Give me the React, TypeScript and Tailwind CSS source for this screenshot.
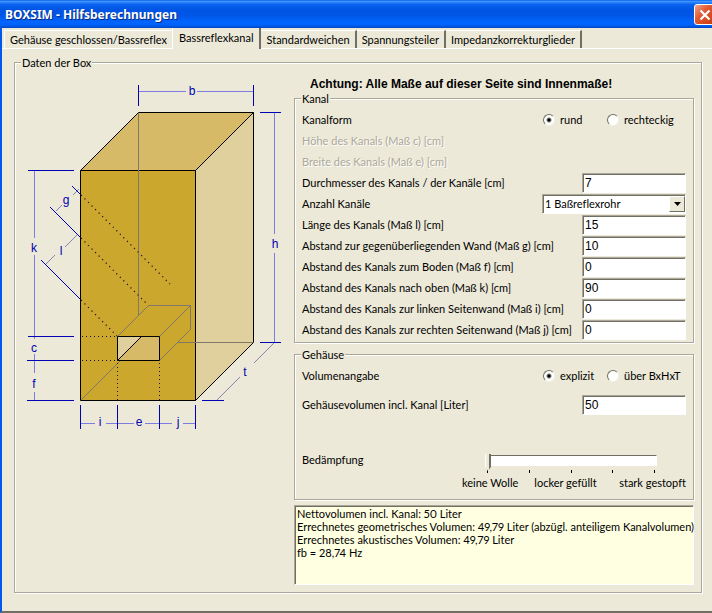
import { useState } from "react";
import type { ReactNode } from "react";
import { clsx } from "clsx";

const tabs = [
  "Gehäuse geschlossen/Bassreflex",
  "Bassreflexkanal",
  "Standardweichen",
  "Spannungsteiler",
  "Impedanzkorrekturglieder",
];

const channelFields = [
  { id: "laenge", label: "Länge des Kanals (Maß l) [cm]", value: "15" },
  { id: "wand", label: "Abstand zur gegenüberliegenden Wand (Maß g) [cm]", value: "10" },
  { id: "boden", label: "Abstand des Kanals zum Boden (Maß f) [cm]", value: "0" },
  { id: "oben", label: "Abstand des Kanals nach oben (Maß k) [cm]", value: "90" },
  { id: "links", label: "Abstand des Kanals zur linken Seitenwand (Maß i) [cm]", value: "0" },
  { id: "rechts", label: "Abstand des Kanals zur rechten Seitenwand (Maß j) [cm]", value: "0" },
];

const sunken =
  "border border-t-[#aca899] border-l-[#aca899] border-r-white border-b-white shadow-[inset_1px_1px_0_#716f64]";

function TitleBar() {
  return (
    <header className="flex h-7 items-center justify-between bg-[linear-gradient(#0a5fe8_0%,#3d95ff_5%,#0a62f0_16%,#0054e3_35%,#0056e6_55%,#0066ff_80%,#0061f8_90%,#0045c4_100%)] pt-px pl-[5px]">
      <h1 className="font-['Noto_Sans','Open_Sans',sans-serif] text-[12px] font-bold text-white [text-shadow:1px_1px_0_#0a2a80]">
        BOXSIM - Hilfsberechnungen
      </h1>
      <button
        type="button"
        aria-label="Schließen"
        className="-mr-[3px] flex size-[21px] items-center justify-center rounded-[3px] border border-white bg-[linear-gradient(135deg,#f0a58c,#e25a33_40%,#c83a10)]"
      >
        <svg viewBox="0 0 12 12" className="size-3" aria-hidden="true">
          <path d="M1.5 1.5 10.5 10.5 M10.5 1.5 1.5 10.5" stroke="#fff" strokeWidth="2.2" />
        </svg>
      </button>
    </header>
  );
}

function Group({ title, className, children }: { title: string; className?: string; children: ReactNode }) {
  return (
    <fieldset
      className={clsx(
        "min-w-0 border border-[#aca899] shadow-[inset_1px_1px_0_#fff,1px_1px_0_#fff]",
        className
      )}
    >
      <legend className="ml-[6px] bg-[#ece9d8] px-px leading-[13px]">{title}</legend>
      {children}
    </fieldset>
  );
}

function Field({ id, label, value, autoFocus }: { id: string; label: string; value: string; autoFocus?: boolean }) {
  return (
    <div className="flex h-[21px] items-center justify-between">
      <label htmlFor={id}>{label}</label>
      <input
        id={id}
        type="text"
        defaultValue={value}
        autoFocus={autoFocus}
        className={clsx(
          "h-5 w-[104px] bg-white pl-[2px] font-['Liberation_Sans',Arial,sans-serif] text-[12px] outline-none",
          sunken
        )}
      />
    </div>
  );
}

function RadioRow({ name, label, options }: { name: string; label: string; options: string[] }) {
  return (
    <div role="radiogroup" aria-label={label} className="flex h-[21px] items-center justify-between">
      <span>{label}</span>
      <div className="grid w-[143px] grid-cols-[64px_1fr]">
        {options.map((option, i) => (
          <label key={option} className="flex items-center gap-[5px] whitespace-nowrap">
            <input
              type="radio"
              name={name}
              defaultChecked={i === 0}
              className="size-3 shrink-0 appearance-none rounded-full border border-t-[#716f64] border-r-[#f4f2e8] border-b-[#f4f2e8] border-l-[#716f64] bg-white checked:bg-[radial-gradient(circle,#000_1px,#fff_3px)]"
            />
            {option}
          </label>
        ))}
      </div>
    </div>
  );
}

function BoxDrawing() {
  return (
    <svg
      viewBox="15 70 275 370"
      className="mt-px h-[370px] w-[275px] shrink-0"
      role="img"
      aria-label="Maße der Box"
      fill="none"
    >
      {/* cabinet */}
      <g stroke="#000">
        <path d="M80.5 170.5 138.5 112.5H253.5L195.5 170.5Z" fill="#d6ba67" />
        <path d="M195.5 170.5 253.5 112.5V342.5L195.5 400.5Z" fill="#e0d09d" />
        <path d="M80.5 170.5H195.5V400.5H80.5Z" fill="#cba72e" />
      </g>

      {/* hidden edges */}
      <g stroke="#80796a">
        <path d="M138.5 113V315" />
        <path d="M81 400 120 361" />
        <path d="M177 342.5H253" />
        <path d="M117.5 336.5 148.5 305.5H190.5V329.5L159.5 360.5" />
        <path d="M159.5 336.5 190.5 305.5" />
      </g>

      {/* channel opening */}
      <path d="M117.5 336.5H159.5V360.5H117.5Z" fill="#d6ba67" />
      <path d="M117.5 336.5H141.5L117.5 360.5Z" fill="#e0d09d" />
      <path d="M117.5 360.5 141.5 336.5" stroke="#000" />
      <path d="M117.5 336.5H159.5V360.5H117.5Z" stroke="#000" />

      {/* guides */}
      <g stroke="#1a1030" strokeDasharray="1 3">
        <path d="M82 336.5H117 M82 360.5H117" />
        <path d="M117.5 363V400 M159.5 363V400" />
      </g>
      <g stroke="#1a1030" strokeWidth="1.2" strokeDasharray="1.2 3.8">
        <path d="M81 195 170 284" />
        <path d="M81 238 148 305" />
        <path d="M81 300 117 336" />
      </g>

      {/* dimension lines */}
      <g stroke="#7d7de0">
        <path d="M139 91.5H186 M197 91.5H253" />
        <path d="M274.5 113V234 M274.5 253V342" />
        <path d="M34.5 171V238 M34.5 255V339 M34.5 354V373 M34.5 392V400" />
        <path d="M81 423.5H95 M106 423.5H134 M145 423.5H172 M183 423.5H195" />
      </g>
      <g stroke="#8585b5">
        <path d="M274 343 254 363 M240 377 217 400" />
        <path d="M79 189 73 195 M62 205 56 211" />
        <path d="M78 234 65 247 M55 255 46 264" />
      </g>
      <g stroke="#0000b4">
        <path d="M138.5 85V106 M253.5 85V106" />
        <path d="M260 112.5H281 M260 342.5H281 M202 400.5H224" />
        <path d="M28 170.5H74 M28 336.5H74 M27 360.5H74 M27 400.5H74" />
        <path d="M80.5 405V429 M117.5 405V429 M159.5 405V429 M195.5 405V429" />
        <path d="M72 186 80.5 194.5 M50 207 80.5 237.5 M41 260 80.5 299.5" />
      </g>

      <g
        className="font-['Liberation_Sans',Arial,sans-serif]"
        fill="#0000b4"
        fontSize="12"
        textAnchor="middle"
      >
        <text x="192" y="95">b</text>
        <text x="275" y="248">h</text>
        <text x="245" y="376">t</text>
        <text x="66" y="204">g</text>
        <text x="61" y="255">l</text>
        <text x="34" y="252">k</text>
        <text x="34" y="352">c</text>
        <text x="34" y="388">f</text>
        <text x="100" y="426">i</text>
        <text x="139" y="426">e</text>
        <text x="178" y="426">j</text>
      </g>
    </svg>
  );
}

function DampingSlider() {
  return (
    <div className="flex items-start justify-between pt-9">
      <label htmlFor="daempfung" className="pt-[2px]">
        Bedämpfung
      </label>
      <div className="w-[224px]">
        <div className="mr-[29px] ml-[23px]">
          <input
            id="daempfung"
            type="range"
            min={0}
            max={4}
            defaultValue={0}
            className="block h-[19px] w-full appearance-none bg-transparent outline-none [&::-webkit-slider-runnable-track]:h-[11px] [&::-webkit-slider-runnable-track]:border [&::-webkit-slider-runnable-track]:border-t-[#716f64] [&::-webkit-slider-runnable-track]:border-r-white [&::-webkit-slider-runnable-track]:border-b-white [&::-webkit-slider-runnable-track]:border-l-[#716f64] [&::-webkit-slider-runnable-track]:bg-white [&::-webkit-slider-thumb]:-mt-[2px] [&::-webkit-slider-thumb]:-ml-px [&::-webkit-slider-thumb]:h-[17px] [&::-webkit-slider-thumb]:w-[6px] [&::-webkit-slider-thumb]:appearance-none [&::-webkit-slider-thumb]:bg-[linear-gradient(90deg,#fff_1px,#ece9d8_1px,#ece9d8_4px,#716f64_4px)] [&::-webkit-slider-thumb]:[clip-path:polygon(0_0,100%_0,100%_75%,50%_100%,0_75%)]"
          />
          <div className="flex justify-between px-[2px]">
            {[0, 1, 2, 3, 4].map((tick) => (
              <span key={tick} className="h-[3px] w-px bg-black" />
            ))}
          </div>
        </div>
        <div className="mt-[3px] flex gap-4 whitespace-nowrap">
          <span>keine Wolle</span>
          <span>locker gefüllt</span>
          <span className="ml-auto">stark gestopft</span>
        </div>
      </div>
    </div>
  );
}

export default function App() {
  const [active, setActive] = useState(1);

  return (
    <div className="overflow-hidden bg-[#ece9d8] font-[Lato,'Liberation_Sans',sans-serif] text-[11px] leading-[13px] text-black [font-variant-ligatures:none]">
      <TitleBar />
      <div className="border-b-2 border-l-2 border-b-[#716f64] border-l-[#0058ee]">
        <div role="tablist" className="flex h-[21px] items-end border-b border-white pl-[2px]">
          {tabs.map((tab, i) => (
            <button
              key={tab}
              type="button"
              role="tab"
              aria-selected={active === i}
              onClick={() => setActive(i)}
              className={clsx(
                "whitespace-nowrap",
                active === i
                  ? "-mb-px h-[21px] border-r-2 border-l border-r-[#716f64] border-l-white bg-[#ece9d8] px-[6px] pb-[2px]"
                  : "h-[18px] border-t border-white px-[5px]",
                active > i ? "border-l" : active < i && "border-r-2 border-r-[#716f64]"
              )}
            >
              {tab}
            </button>
          ))}
        </div>

        <main className="pt-[7px] pr-[10px] pb-[18px] pl-3">
          <Group title="Daten der Box">
            <div className="flex pr-[7px] pb-[7px]">
              <BoxDrawing />
              <div className="ml-1 min-w-0 flex-1 pt-2">
                <h2 className="pl-4 font-['Liberation_Sans',Arial,sans-serif] text-[12px] leading-[15px] font-bold">
                  Achtung: Alle Maße auf dieser Seite sind Innenmaße!
                </h2>

                <Group title="Kanal" className="pr-[7px] pb-[2px]">
                  <div className="pt-1 pl-[7px]">
                    <RadioRow name="kanalform" label="Kanalform" options={["rund", "rechteckig"]} />
                    <p className="flex h-[21px] items-center text-[#aca899] [text-shadow:1px_1px_0_#fff]">
                      Höhe des Kanals (Maß c) [cm]
                    </p>
                    <p className="flex h-[21px] items-center text-[#aca899] [text-shadow:1px_1px_0_#fff]">
                      Breite des Kanals (Maß e) [cm]
                    </p>
                    <Field id="durchmesser" label="Durchmesser des Kanals / der Kanäle [cm]" value="7" />
                    <div className="flex h-[21px] items-center justify-between">
                      <label htmlFor="anzahl">Anzahl Kanäle</label>
                      <div className="relative w-[144px]">
                        <select
                          id="anzahl"
                          className={clsx("block h-5 w-full appearance-none bg-white pl-[2px] outline-none", sunken)}
                        >
                          <option>1 Baßreflexrohr</option>
                          <option>2 Baßreflexrohre</option>
                        </select>
                        <span className="pointer-events-none absolute top-[2px] right-px flex h-4 w-4 items-center justify-center border border-t-white border-r-[#716f64] border-b-[#716f64] border-l-white bg-[#ece9d8]">
                          <svg viewBox="0 0 7 4" className="h-1 w-[7px]" aria-hidden="true">
                            <path d="M0 0H7L3.5 4Z" />
                          </svg>
                        </span>
                      </div>
                    </div>
                    {channelFields.map((field) => (
                      <Field key={field.id} {...field} />
                    ))}
                  </div>
                </Group>

                <Group title="Gehäuse" className="mt-[5px] pr-[7px] pb-[10px]">
                  <div className="pt-1 pl-[7px]">
                    <RadioRow name="volumenangabe" label="Volumenangabe" options={["explizit", "über BxHxT"]} />
                    <div className="pt-2">
                      <Field id="volumen" label="Gehäusevolumen incl. Kanal [Liter]" value="50" autoFocus />
                    </div>
                    <DampingSlider />
                  </div>
                </Group>

                <output
                  className={clsx(
                    "mt-[5px] block h-20 bg-[#ffffe1] pt-px pl-[2px] whitespace-nowrap proportional-nums",
                    sunken
                  )}
                >
                  <p>Nettovolumen incl. Kanal: 50 Liter</p>
                  <p>Errechnetes geometrisches Volumen: 49,79 Liter (abzügl. anteiligem Kanalvolumen)</p>
                  <p>Errechnetes akustisches Volumen: 49,79 Liter</p>
                  <p>fb = 28,74 Hz</p>
                </output>
              </div>
            </div>
          </Group>
        </main>
      </div>
    </div>
  );
}
